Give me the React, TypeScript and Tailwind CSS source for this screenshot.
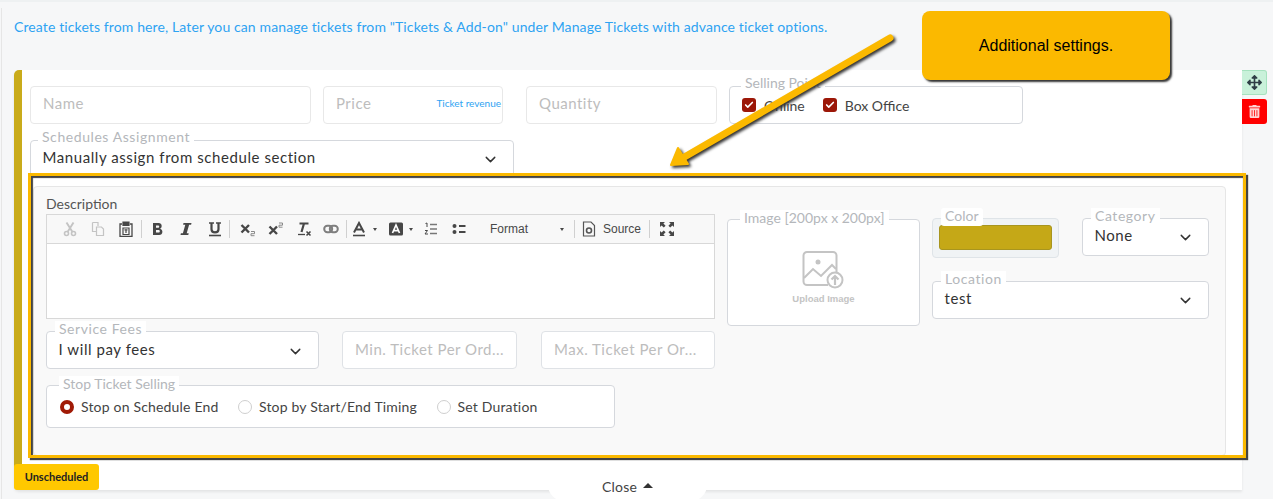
import React from "react";
import { ChevronDown, Check } from "lucide-react";
import { FaArrowsAlt, FaTrashAlt } from "react-icons/fa";

const F = "font-['Lato','Noto_Sans',sans-serif]";

function Floating({ text, className = "" }: { text: string; className?: string }) {
  return (
    <span className={`absolute bg-white px-1 text-[14px] leading-[16px] text-[#b4b7bb] whitespace-nowrap ${className}`}>{text}</span>
  );
}

function Input({ placeholder, className = "", children }: { placeholder: string; className?: string; children?: React.ReactNode }) {
  return (
    <div className={`flex h-[38px] items-center justify-between rounded-[4px] border border-[#dfe2e6] bg-white px-3 text-[15px] tracking-[0.5px] text-[#bdbdbd] ${className}`}>
      <span className="whitespace-nowrap">{placeholder}</span>
      {children}
    </div>
  );
}

function Select({ label, value, className = "", labelClass = "" }: { label: string; value: string; className?: string; labelClass?: string }) {
  return (
    <div className={`relative flex h-[38px] items-center justify-between rounded-[4px] border border-[#d5d8dd] bg-white pl-[11.5px] pr-[14px] text-[15px] tracking-[0.57px] text-[#333] ${className}`}>
      <Floating text={label} className={labelClass} />
      <span className="whitespace-nowrap">{value}</span>
      <ChevronDown size={17} strokeWidth={2} className="-mb-[3px] text-[#333]" />
    </div>
  );
}

function Btn({ w, children }: { w: string; children: React.ReactNode }) {
  return <div className={`flex h-full shrink-0 items-center justify-center ${w}`}>{children}</div>;
}

function Sep() {
  return <div className="h-[18px] w-px shrink-0 bg-[#d0d0d0]" />;
}

function Caret() {
  return <span className="ml-[6px] h-0 w-0 border-x-[2.5px] border-t-[3px] border-x-transparent border-t-[#474747]" />;
}

function Tb({ dim, children }: { dim?: boolean; children?: React.ReactNode }) {
  return (
    <svg width="16" height="16" viewBox="0 0 16 16" fill="none" stroke={dim ? "#c4c4c4" : "#474747"} strokeWidth="1.2">
      {children}
    </svg>
  );
}

function Toolbar() {
  return (
    <div className="flex h-[29px] items-center border-b border-[#d8d8d8] bg-[#f8f8f8] pl-[9px]">
      <Btn w="w-[28px]">
        <Tb dim>
          <circle cx="4.5" cy="12.5" r="2" strokeWidth="1.6" />
          <circle cx="11.5" cy="12.5" r="2" strokeWidth="1.6" />
          <path d="M5.5 11 11.5 1.5M10.5 11 4.5 1.5" strokeWidth="1.9" />
        </Tb>
      </Btn>
      <Btn w="w-[27px]">
        <Tb dim>
          <path d="M2.5 1.5h5.5v3.5M2.5 1.5v9H6" />
          <path d="M6.5 6h5l2 2v6.5h-7z" />
        </Tb>
      </Btn>
      <Btn w="w-[30px]">
        <Tb>
          <path d="M4 3H2v12.5h12V3h-2" strokeWidth="1.3" />
          <path d="M5 1h6v3.5H5z" fill="#474747" />
          <path d="M5 7h6v6.5H5z" />
          <path d="M6.5 8.8h3M8 8.8v3.2" />
        </Tb>
      </Btn>
      <Sep />
      <div className="w-[2px] shrink-0" />
      <Btn w="w-[28px]">
        <svg width="16" height="16" viewBox="0 0 16 16">
          <path fillRule="evenodd" d="M3 2h5.7c3.6 0 3.9 5 1.3 5.7 3.3.5 3.4 6.3-.9 6.3H3V2Zm3 2.4v2.4h2.2c1.4 0 1.4-2.4 0-2.4H6Zm0 4.6v2.6h2.6c1.6 0 1.6-2.6 0-2.6H6Z" fill="#474747" />
        </svg>
      </Btn>
      <Btn w="w-[28px]">
        <svg width="16" height="16" viewBox="0 0 16 16">
          <path d="M5.5 2h8l-.4 1.8h-2L8.7 12.2h2L10.3 14H2.5l.4-1.8h2L7.3 3.8h-2.2Z" fill="#474747" />
        </svg>
      </Btn>
      <Btn w="w-[29px]">
        <Tb>
          <path d="M4.5 2v6.3c0 4.2 7 4.2 7 0V2" strokeWidth="2.2" />
          <path d="M2 2h5M9 2h5" strokeWidth="1.3" />
          <path d="M2 14.5h12" strokeWidth="1.6" />
        </Tb>
      </Btn>
      <Sep />
      <div className="w-[4px] shrink-0" />
      <Btn w="w-[28px]">
        <Tb>
          <path d="m1.5 4 7.5 7.5M9 4l-7.5 7.5" strokeWidth="2.4" />
          <path d="M11 10.5h3.5v2.2H11v2h3.5" stroke="#8a8a8a" strokeWidth="1" />
        </Tb>
      </Btn>
      <Btn w="w-[28px]">
        <Tb>
          <path d="m1.5 5.5 7.5 7.5M9 5.5 1.5 13" strokeWidth="2.4" />
          <path d="M11 2h3.5v2.2H11v2h3.5" stroke="#8a8a8a" strokeWidth="1" />
        </Tb>
      </Btn>
      <Btn w="w-[27px]">
        <Tb>
          <path d="M3.5 2.5h9M8 2.5 5.5 11" strokeWidth="2.2" />
          <path d="M2 13.5h7" strokeWidth="1.3" />
          <path d="m10.5 10.5 4 4M14.5 10.5l-4 4" strokeWidth="1.6" />
        </Tb>
      </Btn>
      <Btn w="w-[27px]">
        <svg width="16" height="16" viewBox="0 0 16 16" fill="none" stroke="#7e7e7e" strokeWidth="2">
          <rect x="1.2" y="4.8" width="8" height="6.4" rx="3.2" />
          <rect x="6.8" y="4.8" width="8" height="6.4" rx="3.2" />
        </svg>
      </Btn>
      <div className="w-[2px] shrink-0" />
      <Sep />
      <div className="w-[3px] shrink-0" />
      <Btn w="w-[28px]">
        <Tb>
          <path d="M3 11.5 8 2l5 9.5M4.8 8.5h6.4" strokeWidth="2" />
          <path d="M2 14.5h12" strokeWidth="1.6" />
        </Tb>
        <Caret />
      </Btn>
      <div className="w-[9px] shrink-0" />
      <Btn w="w-[28px]">
        <svg width="14" height="14" viewBox="0 0 14 14">
          <rect x="0" y="0.5" width="14" height="13" rx="1.5" fill="#474747" />
          <path d="M3.5 11 7 3l3.5 8M4.8 8.6h4.4" fill="none" stroke="#fff" strokeWidth="1.7" />
        </svg>
        <Caret />
      </Btn>
      <div className="w-[2px] shrink-0" />
      <Btn w="w-[28px]">
        <Tb>
          <path d="M7 3.5h7M7 8h7M7 12.5h7" strokeWidth="1.6" stroke="#777" />
          <path d="M2.5 2.5 4 2v4M2 9.5h2.5L2 13h3" strokeWidth="1" />
        </Tb>
      </Btn>
      <Btn w="w-[28px]">
        <Tb>
          <circle cx="3.5" cy="5" r="2" fill="#474747" stroke="none" />
          <circle cx="3.5" cy="11" r="2" fill="#474747" stroke="none" />
          <path d="M8 5h6.5M8 11h6.5" strokeWidth="1.8" />
        </Tb>
      </Btn>
      <div className="ml-[17px] w-[70px] shrink-0 font-['Liberation_Sans',sans-serif] text-[12px] text-[#484848]">Format</div>
      <span className="h-0 w-0 border-x-[2.5px] border-t-[3px] border-x-transparent border-t-[#474747]" />
      <div className="w-[10px] shrink-0" />
      <Sep />
      <div className="ml-[7px] flex items-center gap-[7px]">
        <svg width="14" height="16" viewBox="0 0 14 16" fill="none" stroke="#555" strokeWidth="1.2">
          <path d="M1.5 1h7.5l3.5 3.5V15h-11Z" />
          <circle cx="7" cy="9.5" r="2.5" strokeWidth="1.6" />
        </svg>
        <span className="font-['Liberation_Sans',sans-serif] text-[12px] text-[#484848]">Source</span>
      </div>
      <div className="w-[8px] shrink-0" />
      <Sep />
      <div className="ml-[9px]">
        <svg width="16" height="16" viewBox="0 0 16 16" fill="#474747">
          <path d="M1 1h5L4.4 2.6 6.6 4.8 4.8 6.6 2.6 4.4 1 6ZM15 1v5l-1.6-1.6-2.2 2.2-1.8-1.8 2.2-2.2L10 1ZM1 15v-5l1.6 1.6 2.2-2.2 1.8 1.8-2.2 2.2L6 15ZM15 15h-5l1.6-1.6-2.2-2.2 1.8-1.8 2.2 2.2L15 10Z" />
        </svg>
      </div>
    </div>
  );
}

function Radio({ on, label }: { on?: boolean; label: string }) {
  return (
    <div className="flex items-center gap-[7px]">
      {on ? (
        <span className="h-[14px] w-[14px] rounded-full border-[4px] border-[#a01a06] bg-white" />
      ) : (
        <span className="h-[14px] w-[14px] rounded-full border border-[#cfcfcf] bg-white" />
      )}
      <span className="whitespace-nowrap text-[14px] tracking-[0.18px] text-[#444]">{label}</span>
    </div>
  );
}

function CheckItem({ label }: { label: string }) {
  return (
    <div className="flex items-center gap-[8px]">
      <span className="flex h-[14px] w-[14px] items-center justify-center rounded-[3px] bg-[#9c1708]">
        <Check size={10} strokeWidth={4} className="text-white" />
      </span>
      <span className="text-[14px] text-[#444]">{label}</span>
    </div>
  );
}

export default function App() {
  return (
    <div className={`relative h-[499px] w-[1273px] overflow-hidden border-t-2 border-[#eef1f2] bg-[#f6f7f8] ${F}`}>
      <div className="absolute bottom-0 left-[1px] top-[6px] w-px bg-[#e6e6e6]" />
      <p className="ml-[14px] pt-[16px] text-[14px] leading-[18px] tracking-[0.115px] text-[#2ea3f2]">
        Create tickets from here, Later you can manage tickets from "Tickets &amp; Add-on" under Manage Tickets with advance ticket options.
      </p>

      <div className="ml-[14px] mt-[34px] flex items-start">
        <div className="h-[420px] w-[1228px] overflow-hidden rounded-l-[5px] border-l-[8px] border-[#c9ab1a] bg-white shadow-[0_2px_3px_rgba(0,0,0,0.08)]">
          <div className="ml-[8px] mt-[16px] flex items-start">
            <Input placeholder="Name" className="w-[281px] border-[#e8e8e8] pb-[3px]" />
            <Input placeholder="Price" className="ml-[12px] w-[180px] border-[#e8e8e8] pb-[3px]">
              <span className="-mr-[11px] text-[10px] tracking-normal text-[#2ea3f2]">Ticket revenue</span>
            </Input>
            <Input placeholder="Quantity" className="ml-[23px] w-[191px] border-[#e8e8e8] pb-[3px]" />
            <div className="relative ml-[12px] flex h-[38px] w-[294px] items-center gap-[18px] rounded-[4px] border border-[#d5d8dd] pl-[12px]">
              <Floating text="Selling Point" className="left-[11px] top-[-12px]" />
              <CheckItem label="Online" />
              <CheckItem label="Box Office" />
            </div>
          </div>

          <Select label="Schedules Assignment" value="Manually assign from schedule section" className="ml-[8px] mt-[16px] w-[484px] pb-[3px]" labelClass="left-[7px] top-[-12px]" />

          <div className="ml-[11px] mr-[16px] mt-[8px] flex h-[270px] items-start rounded-[4px] border border-[#e6e6e6] bg-[#f9f9f9] pl-[12px] pt-[8px]">
            <div className="w-[669px] shrink-0">
              <div className="h-[19px] text-[14px] leading-[18px] text-[#555]">Description</div>
              <div className="h-[105px] border border-[#d8d8d8] bg-white">
                <Toolbar />
              </div>
              <div className="mt-[12px] flex items-start justify-between">
                <Select label="Service Fees" value="I will pay fees" className="w-[273px] pb-[1px]" labelClass="left-[8px] top-[-11px]" />
                <div className="flex gap-[24px]">
                  <Input placeholder="Min. Ticket Per Ord..." className="w-[175px] border-[#d5d8dd] pb-[1px]" />
                  <Input placeholder="Max. Ticket Per Or..." className="w-[174px] border-[#d5d8dd] pb-[1px]" />
                </div>
              </div>
              <div className="relative mt-[16px] flex h-[43px] w-[569px] items-center gap-[19.5px] rounded-[4px] border border-[#d5d8dd] bg-white pl-[13px]">
                <Floating text="Stop Ticket Selling" className="left-[12px] top-[-10px]" />
                <Radio on label="Stop on Schedule End" />
                <Radio label="Stop by Start/End Timing" />
                <Radio label="Set Duration" />
              </div>
            </div>

            <div className="ml-[12px] flex shrink-0 items-start gap-[12px] pt-[23px]">
              <div className="relative mt-[1px] flex h-[107px] w-[193px] flex-col items-center rounded-[4px] border border-[#d5d8dd] bg-white pt-[30px]">
                <Floating text="Image [200px x 200px]" className="left-[12px] top-[-10px] pb-[3px]" />
                <svg width="44" height="40" viewBox="0 0 42 40" fill="none" stroke="#c4c4c4" strokeWidth="2" className="mr-[2px]">
                  <path d="M26 35H5a3.5 3.5 0 0 1-3.5-3.5v-26A3.5 3.5 0 0 1 5 2h26a3.5 3.5 0 0 1 3.5 3.5V22" />
                  <path d="M2 28l9-9 8 7 11-11 4 4" />
                  <circle cx="16" cy="12" r="2.5" fill="#c4c4c4" stroke="none" />
                  <circle cx="33" cy="30" r="7.5" fill="#fff" />
                  <path d="M33 35v-9M29.5 29.5 33 26l3.5 3.5" strokeWidth="2.2" />
                </svg>
                <span className="mt-[2px] font-['Liberation_Sans',sans-serif] text-[9.5px] font-bold text-[#c4c4c4]">Upload Image</span>
              </div>

              <div className="w-[277px]">
                <div className="flex items-start justify-between">
                  <div className="relative h-[40px] w-[127px] rounded-[4px] border border-[#dfe4e8] bg-[#f0f3f5] p-[6px]">
                    <div className="h-[25px] w-[113px] rounded-[3px] border border-[#a8951f] bg-[#c5a817]" />
                    <Floating text="Color" className="left-[8px] top-[-11px] rounded-[3px] pb-[2px]" />
                  </div>
                  <Select label="Category" value="None" className="w-[127px] pb-[3px]" labelClass="left-[8px] top-[-11px]" />
                </div>
                <Select label="Location" value="test" className="mt-[23px] w-[277px] pb-[3px]" labelClass="left-[8px] top-[-11px]" />
              </div>
            </div>
          </div>
        </div>

        <div className="flex flex-col gap-[4px]">
          <div className="flex h-[25px] w-[25px] items-center justify-center rounded-r-[3px] border border-l-0 border-[#a6e2bf] bg-[#c9f1da]">
            <FaArrowsAlt size={15} className="text-[#2f3e46]" />
          </div>
          <div className="flex h-[25px] w-[25px] items-center justify-center rounded-r-[3px] bg-[#ff0000]">
            <FaTrashAlt size={13} className="text-[#ffd5d5]" />
          </div>
        </div>
      </div>

      <div className="absolute left-[28px] top-[171px] h-[285px] w-[1218px] border-[3px] border-[#fbb900] shadow-[2px_2px_1px_#444,inset_2px_2px_1px_#444]" />

      <svg className="absolute left-[664px] top-[28px] drop-shadow-[2px_2px_1.5px_#333]" width="240" height="145" viewBox="0 0 240 145">
        <path d="M226 8 17 129" stroke="#fbb900" strokeWidth="7" strokeLinecap="round" fill="none" />
        <path d="M7 135 14 118 24 134Z" fill="#fbb900" stroke="#fbb900" strokeWidth="2" strokeLinejoin="round" />
      </svg>

      <div className="absolute left-[922px] top-[9px] flex h-[69px] w-[248px] items-center justify-center rounded-[8px] bg-[#fbb900] font-['Liberation_Sans',sans-serif] text-[16px] text-black shadow-[2px_2px_2px_#333]">
        Additional settings.
      </div>

      <div className="absolute left-[14px] top-[462px] flex h-[26px] w-[85px] items-center justify-center rounded-[3px] bg-[#ffc800] text-[11px] font-bold text-[#222]">
        Unscheduled
      </div>

      <div className="absolute left-[548px] top-[470px] flex h-[29px] w-[159px] items-center justify-center gap-[6px] rounded-b-[16px] bg-white text-[14px] tracking-[0.2px] text-[#444]">
        Close
        <span className="mb-[2px] h-0 w-0 border-x-[5px] border-b-[5px] border-x-transparent border-b-[#333]" />
      </div>
    </div>
  );
}
